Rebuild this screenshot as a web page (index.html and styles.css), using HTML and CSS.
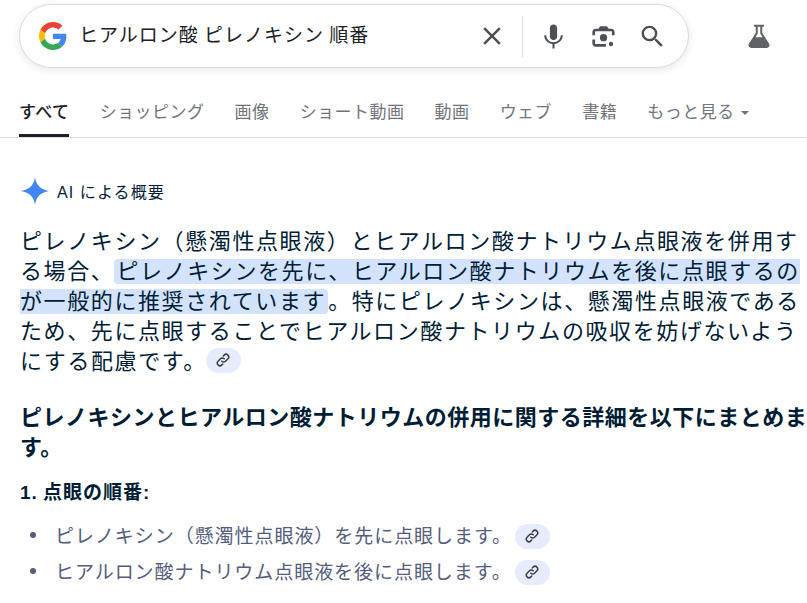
FILE: index.html
```html
<!DOCTYPE html>
<html lang="ja">
<head>
  <meta charset="utf-8"/>
  <link rel="stylesheet" href="styles.css">
  <title>ヒアルロン酸 ピレノキシン 順番</title>
</head>
<body>
  <div class="top-bar">
    <div class="search-box">
      <svg class="g-logo" viewBox="0 0 48 48" width="28" height="28">
        <path fill="#EA4335" d="M24 9.5c3.54 0 6.71 1.22 9.21 3.6l6.85-6.85C35.9 2.38 30.47 0 24 0 14.62 0 6.51 5.38 2.56 13.22l7.98 6.19C12.43 13.72 17.74 9.5 24 9.5z"/>
        <path fill="#4285F4" d="M46.98 24.55c0-1.57-.15-3.09-.38-4.55H24v9.02h12.94c-.58 2.96-2.26 5.48-4.78 7.18l7.73 6c4.51-4.18 7.09-10.36 7.09-17.65z"/>
        <path fill="#FBBC05" d="M10.53 28.59c-.48-1.45-.76-2.99-.76-4.59s.27-3.14.76-4.59l-7.98-6.19C.92 16.46 0 20.12 0 24c0 3.88.92 7.54 2.56 10.78l7.97-6.19z"/>
        <path fill="#34A853" d="M24 48c6.48 0 11.93-2.13 15.89-5.81l-7.73-6c-2.15 1.45-4.92 2.3-8.16 2.3-6.26 0-11.57-4.22-13.47-9.91l-7.98 6.19C6.51 42.62 14.62 48 24 48z"/>
      </svg>
      <div class="query">ヒアルロン酸 ピレノキシン 順番</div>
      <div class="search-actions">
        <svg class="icon clear-icon" viewBox="0 0 24 24" width="30" height="30"><path d="M19 6.41 17.59 5 12 10.59 6.41 5 5 6.41 10.59 12 5 17.59 6.41 19 12 13.41 17.59 19 19 17.59 13.41 12z"/></svg>
        <span class="divider"></span>
        <svg class="icon mic-icon" viewBox="0 0 24 24" width="29" height="29"><path d="M12 15c1.66 0 3-1.31 3-2.97V5c0-1.66-1.34-3-3-3S9 3.34 9 5v7.03C9 13.69 10.34 15 12 15z"/><path d="M18 11.03c0 3.31-2.69 5.7-6 5.7s-6-2.39-6-5.7H4.3c0 3.92 3.1 6.8 6.85 7.28V22h1.7v-3.69c3.75-.48 6.85-3.36 6.85-7.28z"/></svg>
        <svg class="icon lens-icon" viewBox="0 0 24 24" width="29" height="29"><circle cx="12" cy="13" r="3"/><circle cx="18.2" cy="18.2" r="1.8"/><path d="M9.2 3.5 7.8 5.5H5.500C4 5.500 2.800 6.700 2.800 8.200V11H5V8.200C5 7.900 5.200 7.700 5.500 7.700H18.500C18.800 7.700 19 7.900 19 8.200V11H21.200V8.200C21.200 6.700 20 5.500 18.500 5.500H16.200L14.800 3.500Z"/><path d="M2.800 14.500V17.800C2.800 19.300 4 20.500 5.500 20.500H14V18.300H5.500C5.200 18.300 5 18.100 5 17.800V14.500Z"/></svg>
        <svg class="icon search-icon" viewBox="0 0 24 24" width="29" height="29"><path d="M15.500 14h-.79l-.28-.27A6.470 6.470 0 0 0 16 9.500 6.500 6.500 0 1 0 9.500 16c1.610 0 3.090-.59 4.230-1.570l.27.28v.79l5 4.990L20.490 19l-4.990-5zm-6 0C7.010 14 5 11.990 5 9.500S7.010 5 9.500 5 14 7.010 14 9.500 11.990 14 9.500 14z"/></svg>
      </div>
    </div>
    <svg class="icon flask-icon" viewBox="0 0 24 24" width="30" height="30"><path d="M8 3h8v1.600h-1.400v4.900l5.500 8.600c.9 1.500-.1 3.400-1.900 3.400H5.800c-1.800 0-2.800-1.900-1.900-3.400l5.500-8.600V4.600H8zm3 1.600v5.400L9.200 13h5.600L13 10V4.600z"/></svg>
  </div>

  <div class="tabs">
    <div class="tab active">すべて</div>
    <div class="tab">ショッピング</div>
    <div class="tab">画像</div>
    <div class="tab">ショート動画</div>
    <div class="tab">動画</div>
    <div class="tab">ウェブ</div>
    <div class="tab">書籍</div>
    <div class="tab more">もっと見る<span class="caret"></span></div>
  </div>

  <div class="overview">
    <div class="overview-head">
      <svg class="sparkle" viewBox="0 0 30 30" width="30" height="30"><path fill="#4285f4" d="M15 1c.9 7.800 5.400 12.600 14 14-8.600 1.400-13.100 6.200-14 14-.9-7.800-5.400-12.600-14-14C9.600 13.600 14.100 8.800 15 1z"/></svg>
      <span>AI による概要</span>
    </div>

    <p class="summary">ピレノキシン（懸濁性点眼液）とヒアルロン酸ナトリウム点眼液を併用する場合、<mark class="hl"><span class="hl-text">ピレノキシンを先に、ヒアルロン酸ナトリウムを後に点眼するのが一般的に推奨されています</span></mark>。特にピレノキシンは、懸濁性点眼液であるため、先に点眼することでヒアルロン酸ナトリウムの吸収を妨げないようにする配慮です。<span class="link-chip"><svg viewBox="0 0 24 24" width="14" height="14"><use href="#chain"/></svg></span></p>

    <p class="lead">ピレノキシンとヒアルロン酸ナトリウムの併用に関する詳細を以下にまとめます。</p>

    <div class="step-title">1. 点眼の順番:</div>
    <ul class="steps">
      <li>ピレノキシン（懸濁性点眼液）を先に点眼します。<span class="link-chip"><svg viewBox="0 0 24 24" width="14" height="14"><use href="#chain"/></svg></span></li>
      <li>ヒアルロン酸ナトリウム点眼液を後に点眼します。<span class="link-chip"><svg viewBox="0 0 24 24" width="14" height="14"><use href="#chain"/></svg></span></li>
    </ul>
  </div>

  <svg class="defs" width="0" height="0">
    <symbol id="chain" viewBox="0 0 24 24">
      <g fill="none" stroke="#3c4043" stroke-width="2.600" stroke-linecap="round">
        <path d="M10 14a4.500 4.500 0 0 0 6.400 0l4-4a4.500 4.500 0 0 0-6.400-6.400l-1.500 1.500"/>
        <path d="M14 10a4.500 4.500 0 0 0-6.400 0l-4 4a4.500 4.500 0 0 0 6.400 6.400l1.500-1.500"/>
      </g>
    </symbol>
  </svg>
</body>
</html>
```

FILE: styles.css
```css
html, body {
  margin: 0;
  padding: 0;
  background: #fff;
  overflow: hidden;
}

body {
  font-family: "Noto Sans CJK JP", "Liberation Sans", sans-serif;
  color: #001d35;
  width: 807px;
}

.top-bar {
  display: flex;
  align-items: center;
  padding: 4px 0 0 19px;
}

.search-box {
  display: flex;
  align-items: center;
  box-sizing: border-box;
  width: 670px;
  height: 64px;
  padding: 0 21px 0 19px;
  background: #fff;
  border: 1px solid #dadce0;
  border-radius: 32px;
  box-shadow: 0 2px 8px rgba(32, 33, 36, .1);
}

.g-logo {
  flex: none;
}

.query {
  flex: 1 1 auto;
  margin-left: 12px;
  margin-top: -4px;
  font-size: 19px;
  letter-spacing: 1px;
  color: #202124;
  line-height: 26px;
}

.search-actions {
  display: flex;
  align-items: center;
  gap: 21px;
}

.icon {
  fill: #4d5156;
  flex: none;
}

.clear-icon {
  margin-right: -6px;
}

.divider {
  width: 1px;
  height: 41px;
  background: #dadce0;
  margin-right: -5px;
}

.lens-icon {
  margin-right: -1px;
}

.flask-icon {
  margin-left: 55px;
  fill: #5f6368;
}

.tabs {
  display: flex;
  gap: 30.200px;
  height: 70px;
  padding-left: 19px;
  box-sizing: border-box;
  border-bottom: 1px solid #dadce0;
  align-items: flex-end;
}

.tab {
  font-size: 17px;
  letter-spacing: .45px;
  color: #70757a;
  height: 38px;
  line-height: 24px;
  box-sizing: border-box;
  border-bottom: 3px solid transparent;
  white-space: nowrap;
}

.tab.active {
  color: #202124;
  border-bottom-color: #202124;
  font-weight: 500;
}

.caret {
  display: inline-block;
  width: 0;
  height: 0;
  margin-left: 6px;
  vertical-align: 3px;
  border-left: 4px solid transparent;
  border-right: 4px solid transparent;
  border-top: 4px solid #70757a;
}

.overview {
  padding: 37px 0 0 20px;
  width: 790px;
}

.overview-head {
  display: flex;
  align-items: center;
  gap: 7px;
  font-size: 16px;
  height: 32px;
  letter-spacing: 1.100px;
}

.overview-head span {
  font-family: "Liberation Sans", "Noto Sans CJK JP", sans-serif;
}

.summary {
  margin: 17px 0 0;
  font-size: 22px;
  line-height: 30px;
  letter-spacing: 1.600px;
  color: #001d35;
}

/* mark font size sets the height of the highlight, the text inside keeps the body size */
.hl {
  font-size: 17.300px;
  line-height: 0;
  background: #d3e3fd;
  color: inherit;
  border-radius: 4px;
  padding: 0 2px;
}

.hl-text {
  font-size: 22px;
  line-height: 30px;
}

.link-chip {
  display: inline-flex;
  align-items: center;
  justify-content: center;
  vertical-align: 2px;
  width: 35px;
  height: 25px;
  margin-left: 3px;
  background: #e6ecfd;
  border-radius: 13px;
}

.summary .link-chip {
  margin-left: -1px;
}

.steps .link-chip {
  vertical-align: 0;
}

.lead {
  margin: 26px 0 0;
  font-size: 22px;
  font-weight: 700;
  line-height: 30px;
  letter-spacing: .5px;
  width: 800px;
}

.step-title {
  margin-top: 19px;
  font-family: "Liberation Sans", "Noto Sans CJK JP", sans-serif;
  font-size: 19px;
  font-weight: 700;
  line-height: 28px;
  letter-spacing: 1px;
  word-spacing: -1px;
}

.steps {
  list-style: none;
  margin: 10px 0 0;
  padding: 0;
}

.steps li {
  position: relative;
  padding-left: 35px;
  font-size: 19px;
  line-height: 36px;
  letter-spacing: .95px;
  color: #545d7e;
}

.steps li::before {
  content: "";
  position: absolute;
  left: 10px;
  top: 15px;
  width: 6px;
  height: 6px;
  border-radius: 50%;
  background: #545d7e;
}

.defs {
  position: absolute;
}
```
